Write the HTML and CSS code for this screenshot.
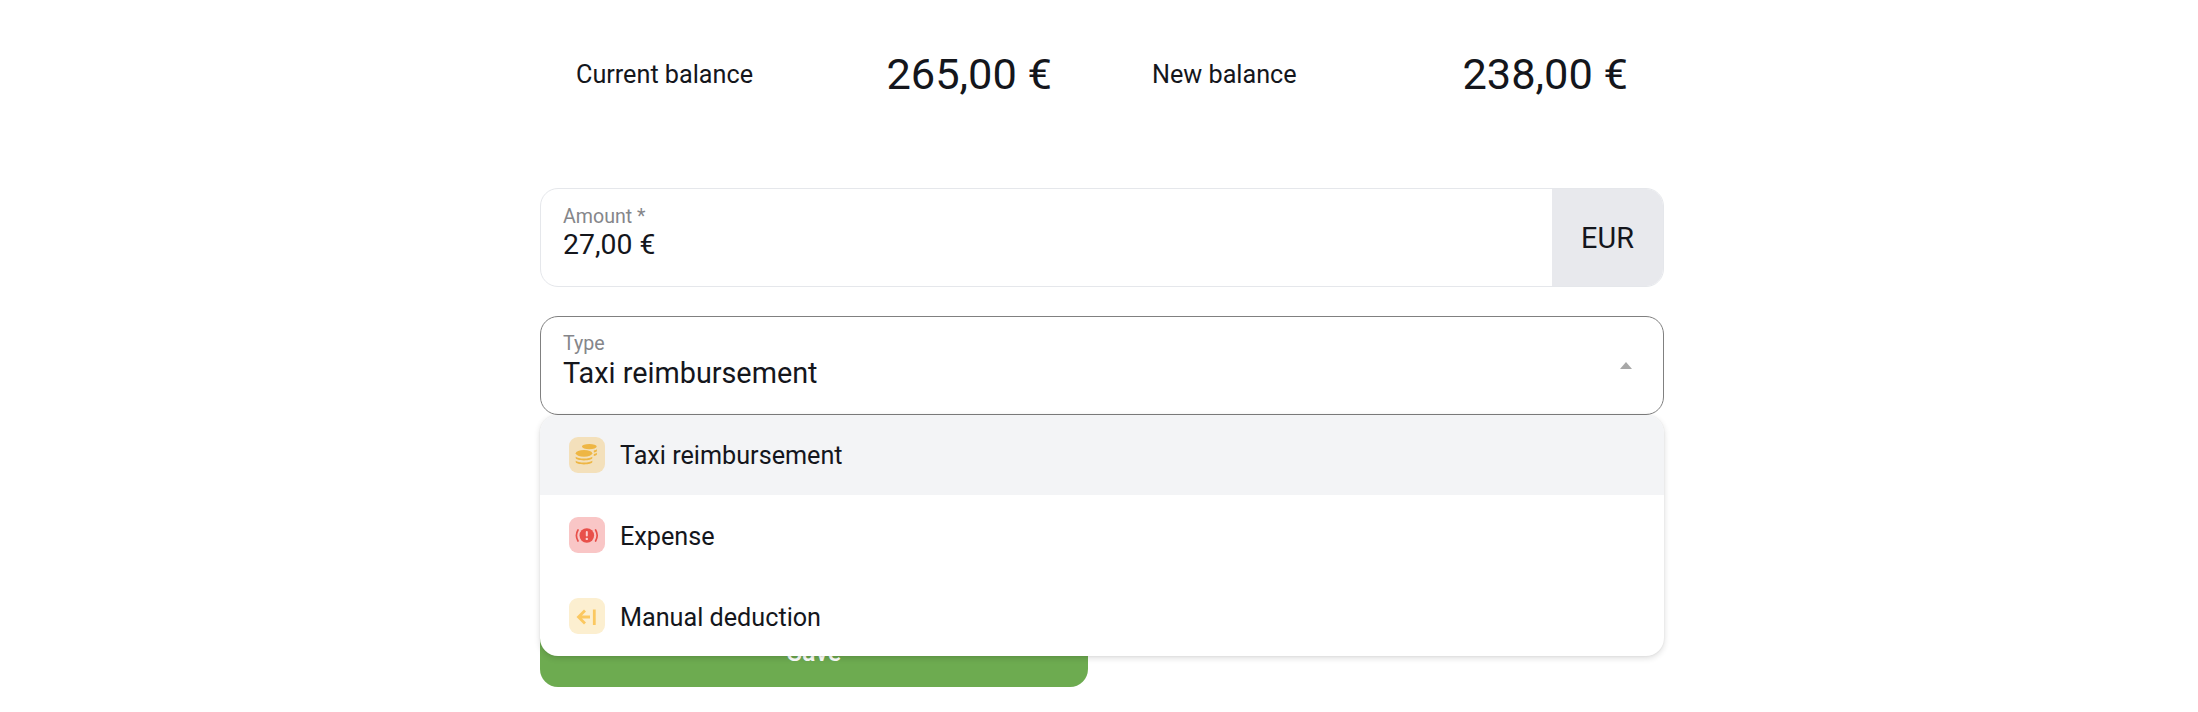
FILE: index.html
```html
<!DOCTYPE html>
<html lang="en">
<head>
<meta charset="utf-8">
<title>Balance</title>
<link rel="stylesheet" href="styles.css">
</head>
<body>
<main class="form">
  <section class="stats">
    <div class="stat"><span class="stat-label">Current balance</span><span class="stat-value">265,00 €</span></div>
    <div class="stat"><span class="stat-label">New balance</span><span class="stat-value">238,00 €</span></div>
  </section>
  <div class="field amount">
    <div class="field-body">
      <span class="field-label">Amount *</span>
      <span class="field-value-sm">27,00 €</span>
    </div>
    <div class="addon">EUR</div>
  </div>
  <div class="select-wrap">
    <div class="field select">
      <div class="field-body">
        <span class="field-label">Type</span>
        <span class="field-value">Taxi reimbursement</span>
      </div>
      <span class="caret"></span>
    </div>
    <ul class="menu">
      <li class="option active">
        <span class="icon icon-coins">
          <svg viewBox="0 0 24 24" width="24" height="24"><g fill="#eeb644">
            <ellipse cx="14.300" cy="3.600" rx="7.400" ry="2.700"/>
            <path d="M18.800 7.400c1.500-.2 2.700-.7 3.100-1.200v1.800c0 .6-1.200 1.200-3.100 1.500z"/>
            <path d="M18.800 10.900c1.500-.2 2.700-.7 3.100-1.200v1.800c0 .6-1.200 1.200-3.100 1.500z"/>
            <ellipse cx="9" cy="10.300" rx="8.300" ry="3.400"/>
            <path d="M.7 13.800c1.400 1.100 4.600 1.800 8.300 1.800s6.900-.7 8.300-1.800v1.300c0 1.300-3.700 2.400-8.300 2.400S.7 16.400.7 15.100z"/>
            <path d="M.7 17.800c1.400 1.100 4.600 1.800 8.300 1.800s6.900-.7 8.300-1.800v1.300c0 1.300-3.700 2.400-8.300 2.400S.7 20.400.7 19.100z"/>
          </g></svg>
        </span>
        <span class="option-text">Taxi reimbursement</span>
      </li>
      <li class="option">
        <span class="icon icon-alert">
          <svg viewBox="0 0 24 24" width="24" height="24">
            <circle cx="11.800" cy="12.500" r="7.300" fill="#e8504a"/>
            <rect x="10.800" y="8" width="2" height="5.600" rx="1" fill="#fbd0d0"/>
            <circle cx="11.800" cy="15.900" r="1.200" fill="#fbd0d0"/>
            <path d="M3 7a11 11 0 0 0 0 11M20.600 7a11 11 0 0 1 0 11" fill="none" stroke="#e8504a" stroke-width="1.700" stroke-linecap="round"/>
          </svg>
        </span>
        <span class="option-text">Expense</span>
      </li>
      <li class="option">
        <span class="icon icon-back">
          <svg viewBox="0 0 24 24" width="24" height="24">
            <path d="M15 13H4M10 6.500 3.500 13l6.500 6.500M19.300 5.500v15.500" fill="none" stroke="#fbc860" stroke-width="2.800"/>
          </svg>
        </span>
        <span class="option-text">Manual deduction</span>
      </li>
    </ul>
  </div>
  <div class="actions">
    <button class="save" type="button">Save</button>
  </div>
</main>
</body>
</html>
```
FILE: styles.css
```css
* { box-sizing: border-box; }
html, body { margin: 0; height: 100%; background: #fff; }
body { padding-left: 6px; font-family: Roboto, "Liberation Sans", sans-serif; color: #14161c; overflow: hidden; }
.form { width: 1124px; margin: 0 auto; }
.stats { display: grid; grid-template-columns: 1fr 1fr; gap: 28px; height: 188px; padding-top: 40px; align-items: start; }
.stat { display: flex; justify-content: space-between; align-items: center; padding: 0 36px; height: 68px; }
.stat-label { font-size: 25.2px; }
.stat-value { font-size: 43.4px; }
.field { display: flex; align-items: stretch; height: 99px; border-radius: 18px; background: #fff; }
.amount { border: 1px solid #e5e7eb; overflow: hidden; }
.select { border: 1px solid #808080; align-items: center; }
.field-body { flex: 1; display: flex; flex-direction: column; justify-content: center; padding: 0 22px 10px; }
.field-label { font-size: 19.6px; line-height: 24px; color: #85868a; }
.field-value-sm { font-size: 28.4px; line-height: 32px; }
.field-value { font-size: 28.8px; line-height: 34px; }
.addon { width: 111px; background: #e8e9ed; display: flex; align-items: center; justify-content: center; font-size: 28.8px; }
.select-wrap { position: relative; margin-top: 29px; }
.caret { width: 0; height: 0; border-left: 6px solid transparent; border-right: 6px solid transparent; border-bottom: 7px solid #a8a8a8; margin-right: 31px; }
.menu { position: absolute; z-index: 2; top: 99px; left: 0; right: 0; height: 241px; margin: 0; padding: 0; list-style: none; background: #fff; border-radius: 18px; overflow: hidden; box-shadow: 0 2px 6px rgba(0,0,0,.14), 0 0 2px rgba(0,0,0,.08); }
.option { display: flex; align-items: center; gap: 15px; height: 81px; padding: 0 29px; font-size: 25.2px; flex: none; }
.option.active { background: #f3f4f6; height: 80px; }
.option + .option .icon { margin-bottom: 2px; }
.option + .option .option-text { margin-top: 2px; }
.icon { width: 36px; height: 36px; border-radius: 9px; display: flex; align-items: center; justify-content: center; }
.icon-coins { background: #f3e0bb; }
.icon-alert { background: #f9c6c6; }
.icon-back { background: #fcefd0; }
.actions { display: grid; grid-template-columns: 1fr 1fr; gap: 28px; margin-top: 202px; }
.save { height: 70px; border: 0; border-radius: 18px; background: #6dab50; color: #fff; font: 500 25.2px Roboto, sans-serif; }
```
